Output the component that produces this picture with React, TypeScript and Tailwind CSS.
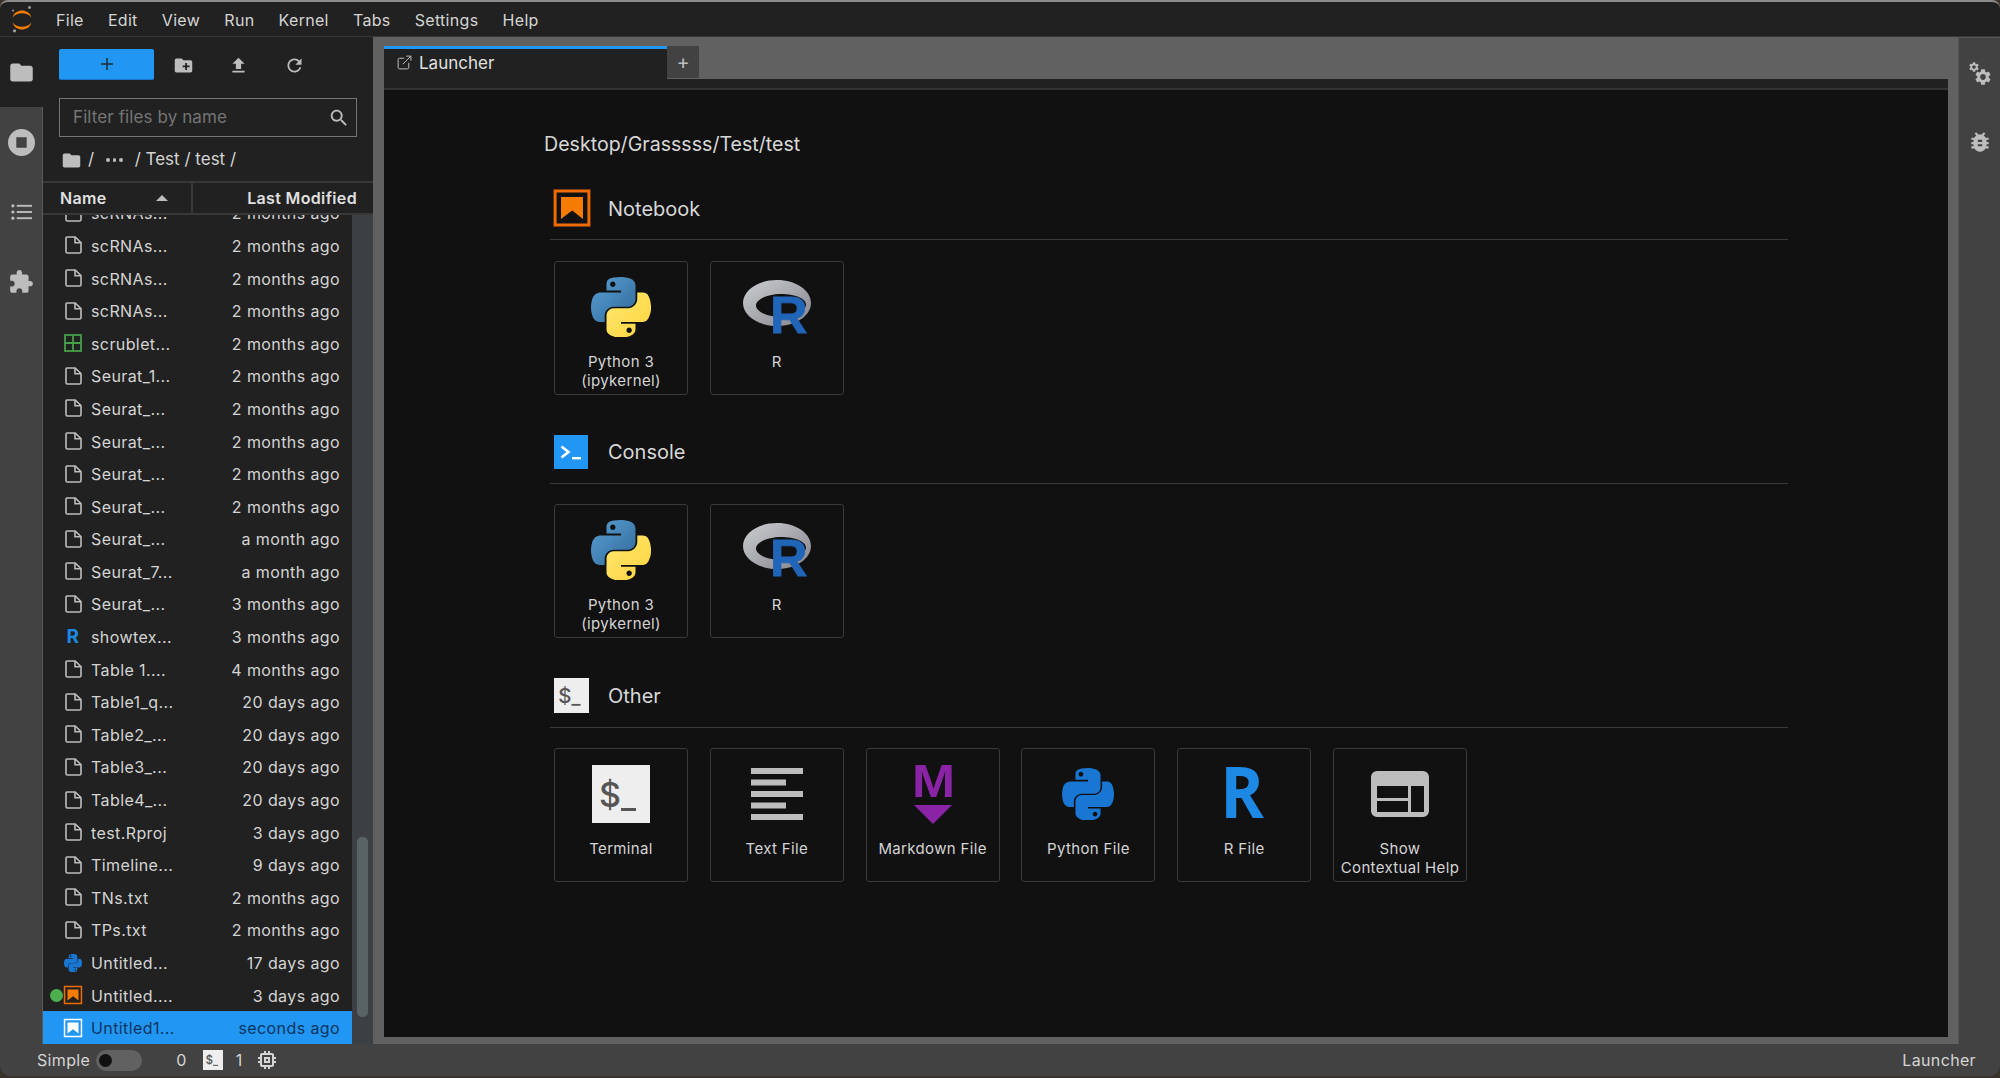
import { ExternalLink } from "lucide-react";
import type { ReactNode } from "react";

const menus = ["File", "Edit", "View", "Run", "Kernel", "Tabs", "Settings", "Help"];

type Kind = "file" | "sheet" | "r" | "py" | "nb" | "nbSel";
type Row = { name: string; time: string; kind?: Kind; dot?: boolean; selected?: boolean };

const rows: Row[] = [
  { name: "scRNAs...", time: "2 months ago" },
  { name: "scRNAs...", time: "2 months ago" },
  { name: "scRNAs...", time: "2 months ago" },
  { name: "scRNAs...", time: "2 months ago" },
  { name: "scrublet...", time: "2 months ago", kind: "sheet" },
  { name: "Seurat_1...", time: "2 months ago" },
  { name: "Seurat_...", time: "2 months ago" },
  { name: "Seurat_...", time: "2 months ago" },
  { name: "Seurat_...", time: "2 months ago" },
  { name: "Seurat_...", time: "2 months ago" },
  { name: "Seurat_...", time: "a month ago" },
  { name: "Seurat_7...", time: "a month ago" },
  { name: "Seurat_...", time: "3 months ago" },
  { name: "showtex...", time: "3 months ago", kind: "r" },
  { name: "Table 1....", time: "4 months ago" },
  { name: "Table1_q...", time: "20 days ago" },
  { name: "Table2_...", time: "20 days ago" },
  { name: "Table3_...", time: "20 days ago" },
  { name: "Table4_...", time: "20 days ago" },
  { name: "test.Rproj", time: "3 days ago" },
  { name: "Timeline...", time: "9 days ago" },
  { name: "TNs.txt", time: "2 months ago" },
  { name: "TPs.txt", time: "2 months ago" },
  { name: "Untitled...", time: "17 days ago", kind: "py" },
  { name: "Untitled....", time: "3 days ago", kind: "nb", dot: true },
  { name: "Untitled1...", time: "seconds ago", kind: "nbSel", selected: true },
];

const PY_TOP =
  "M54.9 0C50.3 0 46 .4 42.1 1.1 30.8 3.1 28.7 7.3 28.7 15v10.2h26.8v3.4H18.6c-7.8 0-14.6 4.7-16.7 13.6-2.5 10.2-2.6 16.6 0 27.3 1.9 7.9 6.5 13.6 14.2 13.6h9.2V71.6c0-8.8 7.7-16.7 16.8-16.7h26.8c7.5 0 13.4-6.1 13.4-13.6V15.8c0-7.3-6.1-12.7-13.4-13.9C64.3.3 59.5 0 54.9 0zM40.4 8.2c2.8 0 5 2.3 5 5.1 0 2.8-2.3 5.1-5 5.1-2.8 0-5-2.3-5-5.1 0-2.8 2.3-5.1 5-5.1z";
const PY_BOTTOM =
  "M85.6 28.7v11.9c0 9.2-7.8 17-16.8 17H42.1c-7.3 0-13.4 6.3-13.4 13.6v25.5c0 7.3 6.3 11.5 13.4 13.6 8.5 2.5 16.6 2.9 26.8 0 6.8-2 13.4-5.9 13.4-13.6V86.5H55.5v-3.4h40.2c7.8 0 10.7-5.4 13.4-13.6 2.8-8.4 2.7-16.5 0-27.2-1.9-7.8-5.6-13.6-13.4-13.6H85.6zM70.6 93.3c2.8 0 5 2.3 5 5.1 0 2.8-2.3 5.1-5 5.1-2.8 0-5-2.3-5-5.1 0-2.8 2.3-5.1 5-5.1z";
const GEAR =
  "M19.14 12.94c.04-.3.06-.61.06-.94 0-.32-.02-.64-.07-.94l2.03-1.58c.18-.14.23-.41.12-.61l-1.92-3.32c-.12-.22-.37-.29-.59-.22l-2.39.96c-.5-.38-1.03-.7-1.62-.94l-.36-2.54c-.04-.24-.24-.41-.48-.41h-3.84c-.24 0-.43.17-.47.41l-.36 2.54c-.59.24-1.13.57-1.62.94l-2.39-.96c-.22-.08-.47 0-.59.22L2.74 8.87c-.12.21-.08.47.12.61l2.03 1.58c-.05.3-.09.63-.09.94s.02.64.07.94l-2.03 1.58c-.18.14-.23.41-.12.61l1.92 3.32c.12.22.37.29.59.22l2.39-.96c.5.38 1.03.7 1.62.94l.36 2.54c.05.24.24.41.48.41h3.84c.24 0 .44-.17.47-.41l.36-2.54c.59-.24 1.13-.56 1.62-.94l2.39.96c.22.08.47 0 .59-.22l1.92-3.32c.12-.22.07-.47-.12-.61l-2.01-1.58zM12 15.6c-1.98 0-3.6-1.62-3.6-3.6s1.62-3.6 3.6-3.6 3.6 1.62 3.6 3.6-1.62 3.6-3.6 3.6z";

function Fill({ d, size, className }: { d: string; size: number; className?: string }) {
  return (
    <svg viewBox="0 0 24 24" width={size} height={size} className={className} fill="currentColor">
      <path d={d} />
    </svg>
  );
}

function JupyterLogo() {
  return (
    <svg viewBox="0 0 22 28" width="22" height="28">
      <path d="M1.5 12.5C3 7.5 7 5.5 11 5.5s8 2 9.5 7C18 9.6 14.6 8.3 11 8.3S4 9.6 1.5 12.5z" fill="#f57c00" />
      <path d="M1.5 17.5C3 22.5 7 24.5 11 24.5s8-2 9.5-7C18 20.4 14.6 21.7 11 21.7S4 20.4 1.5 17.5z" fill="#f57c00" />
      <circle cx="18.5" cy="2.5" r="1.4" fill="#9e9e9e" />
      <circle cx="2" cy="5.5" r="1" fill="#9e9e9e" />
      <circle cx="3.5" cy="25.8" r="1.6" fill="#9e9e9e" />
    </svg>
  );
}

function StopIcon() {
  return (
    <svg viewBox="0 0 26 26" width="27" height="27">
      <path fillRule="evenodd" d="M13 0a13 13 0 1 0 0 26 13 13 0 0 0 0-26zM8 8h10v10H8z" fill="#bdbdbd" />
    </svg>
  );
}

function ListIcon() {
  return (
    <svg viewBox="0 0 22 18" width="21" height="18" fill="#bdbdbd">
      <circle cx="2" cy="2.5" r="1.7" />
      <circle cx="2" cy="9" r="1.7" />
      <circle cx="2" cy="15.5" r="1.7" />
      <rect x="6" y="1.5" width="16" height="2" />
      <rect x="6" y="8" width="16" height="2" />
      <rect x="6" y="14.5" width="16" height="2" />
    </svg>
  );
}

function FileIcon() {
  return (
    <svg viewBox="0 0 17 18" width="17" height="18" fill="none" stroke="#bdbdbd" strokeWidth="1.6">
      <path d="M2 1h8.2L16 6.6V15.6a1.4 1.4 0 0 1-1.4 1.4H2.4A1.4 1.4 0 0 1 1 15.6V2a1 1 0 0 1 1-1z" />
      <path d="M10 1v5.8h6" />
    </svg>
  );
}

function SheetIcon() {
  return (
    <svg viewBox="0 0 18 18" width="18" height="18" fill="none" stroke="#43a047" strokeWidth="1.8">
      <rect x="1" y="1" width="16" height="16" />
      <path d="M9 1v16M1 9h16" />
    </svg>
  );
}

function PythonMono({ size, color = "#1976d2" }: { size: number; color?: string }) {
  return (
    <svg viewBox="0 0 111 111" width={size} height={size} fill={color}>
      <path d={PY_TOP} />
      <path d={PY_BOTTOM} />
    </svg>
  );
}

function PythonLogo({ id }: { id: string }) {
  return (
    <svg viewBox="0 0 111 111" width="60" height="60">
      <defs>
        <linearGradient id={`${id}b`} x1="0" y1="0" x2="1" y2="1">
          <stop offset="0" stopColor="#5a9fd4" />
          <stop offset="1" stopColor="#306998" />
        </linearGradient>
        <linearGradient id={`${id}y`} x1="0" y1="0" x2="1" y2="1">
          <stop offset="0" stopColor="#ffe873" />
          <stop offset="1" stopColor="#ffd43b" />
        </linearGradient>
      </defs>
      <path d={PY_TOP} fill={`url(#${id}b)`} />
      <path d={PY_BOTTOM} fill={`url(#${id}y)`} />
    </svg>
  );
}

function RLogo({ id }: { id: string }) {
  return (
    <svg viewBox="0 0 68 54" width="68" height="54">
      <defs>
        <linearGradient id={id} x1="0" y1="0" x2="1" y2="1">
          <stop offset="0" stopColor="#cbced0" />
          <stop offset="1" stopColor="#84838b" />
        </linearGradient>
      </defs>
      <path
        fillRule="evenodd"
        fill={`url(#${id})`}
        d="M34 0C15.2 0 0 10.3 0 23s15.2 23 34 23 34-10.3 34-23S52.8 0 34 0zm4 14c13.8 0 25 4.6 25 10.5S51.8 37 38 37 13 31.4 13 25.5 24.2 14 38 14z"
      />
      <text
        x="27"
        y="53"
        fontFamily="'Liberation Sans', sans-serif"
        fontWeight="700"
        fontSize="52"
        fill="#2165b8"
        stroke="#2165b8"
        strokeWidth="0.8"
      >
        R
      </text>
    </svg>
  );
}

function NotebookIcon({ size, color = "#ef6c00", fill = "#f57c00" }: { size: number; color?: string; fill?: string }) {
  return (
    <svg viewBox="0 0 22 22" width={size} height={size} className="shrink-0">
      <path fill={color} d="M18.7 3.3v15.4H3.3V3.3h15.4m1.5-1.5H1.8v18.4h18.4V1.8z" />
      <path fill={fill} d="M16.5 16.5l-5.4-4.3-5.6 4.3v-11h11z" />
    </svg>
  );
}

function ConsoleIcon() {
  return (
    <svg viewBox="0 0 34 34" width="34" height="34" className="-ml-[1px]">
      <rect width="34" height="34" fill="#2196f3" />
      <path d="M7.5 11.5l7 5.5-7 5.5" fill="none" stroke="#fff" strokeWidth="2.6" />
      <rect x="18" y="22" width="9" height="2.4" fill="#fff" />
    </svg>
  );
}

function TerminalIcon({ size }: { size: number }) {
  return (
    <svg viewBox="0 0 58 58" width={size} height={size}>
      <rect width="58" height="58" fill="#eeeeee" />
      <text x="7" y="42" fontFamily="Inter, sans-serif" fontWeight="500" fontSize="34" fill="#555555">
        $
      </text>
      <rect x="29" y="43" width="15" height="3" fill="#555555" />
    </svg>
  );
}

function TextFileIcon() {
  return (
    <svg viewBox="0 0 52 52" width="52" height="52" fill="#bdbdbd">
      <rect y="0" width="52" height="6" />
      <rect y="11.5" width="35" height="6" />
      <rect y="23" width="52" height="6" />
      <rect y="34.5" width="35" height="6" />
      <rect y="46" width="52" height="6" />
    </svg>
  );
}

function MarkdownIcon() {
  return (
    <svg viewBox="0 0 40 62" width="40" height="62">
      <text
        transform="translate(20.5 34) scale(1.1 1)"
        textAnchor="middle"
        fontFamily="'Liberation Sans', sans-serif"
        fontWeight="700"
        fontSize="47"
        fill="#8a23a6"
      >
        M
      </text>
      <path d="M1 42h38L20 61z" fill="#8a23a6" />
    </svg>
  );
}

function RFileIcon() {
  return (
    <svg viewBox="0 0 44 54" width="44" height="54">
      <text
        transform="translate(20 50.5) scale(0.92 1)"
        textAnchor="middle"
        fontFamily="'Open Sans', sans-serif"
        fontWeight="700"
        fontSize="72"
        fill="#1e88e5"
      >
        R
      </text>
    </svg>
  );
}

function HelpIcon() {
  return (
    <svg viewBox="0 0 58 46" width="58" height="46">
      <path
        fillRule="evenodd"
        fill="#bdbdbd"
        d="M6 0h46a6 6 0 0 1 6 6v34a6 6 0 0 1-6 6H6a6 6 0 0 1-6-6V6a6 6 0 0 1 6-6zM6 15v12h31V15zm0 15v11h31V30zm34-15v26h13V15z"
      />
    </svg>
  );
}

function GearsIcon() {
  return (
    <svg viewBox="0 0 24 24" width="24" height="24" fill="#bdbdbd">
      <g transform="scale(0.5)">
        <path d={GEAR} />
      </g>
      <g transform="translate(5.4 6.4) scale(0.8)">
        <path d={GEAR} />
      </g>
    </svg>
  );
}

function RowIcon({ kind }: { kind: Kind }) {
  if (kind === "sheet") return <SheetIcon />;
  if (kind === "py") return <PythonMono size={18} />;
  if (kind === "nb") return <NotebookIcon size={22} />;
  if (kind === "nbSel") return <NotebookIcon size={22} color="#ffffff" fill="#ffffff" />;
  if (kind === "r") return <span className="text-[19px] leading-none font-bold text-[#1e88e5]">R</span>;
  return <FileIcon />;
}

function FileRow({ row }: { row: Row }) {
  return (
    <div
      className={`flex h-[32.6px] shrink-0 items-center pr-[12px] text-[16px] tracking-[0.4px] ${
        row.selected ? "bg-[#2196f3] text-[#0b3560]" : "text-[#d4d4d4]"
      }`}
    >
      <div className="flex w-[21px] justify-end pr-px">
        {row.dot && <div className="h-[13px] w-[13px] rounded-full bg-[#4caf50]" />}
      </div>
      <div className="flex w-[18px] items-center justify-center">
        <RowIcon kind={row.kind ?? "file"} />
      </div>
      <span className="ml-[9px] flex-1 pt-px">{row.name}</span>
      <span className="pt-px">{row.time}</span>
    </div>
  );
}

function FileBrowser() {
  return (
    <div className="flex w-[330px] flex-col bg-[#212121]">
      <div className="mt-[12px] flex h-[31px] items-center pl-[16px] text-[#bdbdbd]">
        <div className="flex h-[31px] w-[95px] items-center justify-center rounded-[2px] border-b border-[#1976d2] bg-[#2196f3]">
          <svg viewBox="0 0 16 16" width="16" height="16" fill="none" stroke="#1c2b38" strokeWidth="1.5">
            <path d="M8 2v12M2 8h12" />
          </svg>
        </div>
        <Fill
          className="ml-[19px] mt-[2px]"
          size={21}
          d="M20 6h-8l-2-2H4c-1.11 0-1.99.89-1.99 2L2 18c0 1.11.89 2 2 2h16c1.11 0 2-.89 2-2V8c0-1.11-.89-2-2-2zm-1 8h-3v3h-2v-3h-3v-2h3V9h2v3h3v2z"
        />
        <Fill className="ml-[34px] mt-[2px]" size={21} d="M9 16h6v-6h4l-7-7-7 7h4zm-4 2h14v2H5z" />
        <Fill
          className="ml-[35px] mt-[2px]"
          size={21}
          d="M17.65 6.35C16.2 4.9 14.21 4 12 4c-4.42 0-7.99 3.58-7.99 8s3.57 8 7.99 8c3.73 0 6.84-2.55 7.73-6h-2.08c-.82 2.33-3.04 4-5.65 4-3.31 0-6-2.69-6-6s2.69-6 6-6c1.66 0 3.14.69 4.22 1.78L13 11h7V4l-2.35 2.35z"
        />
      </div>

      <div className="mx-[16px] mt-[18px] flex h-[39px] items-center justify-between border border-[#757575] pl-[13px] pr-[6px]">
        <span className="text-[17px] tracking-[0.1px] text-[#757575]">Filter files by name</span>
        <Fill
          className="text-[#bdbdbd]"
          size={22}
          d="M15.5 14h-.79l-.28-.27C15.41 12.59 16 11.11 16 9.5 16 5.91 13.09 3 9.5 3S3 5.91 3 9.5 5.91 16 9.5 16c1.61 0 3.09-.59 4.23-1.57l.27.28v.79l5 4.99L20.49 19l-4.99-5zm-6 0C7.01 14 5 11.99 5 9.5S7.01 5 9.5 5 14 7.01 14 9.5 11.99 14 9.5 14z"
        />
      </div>

      <div className="flex h-[44px] items-center pl-[18px] pt-[2px] text-[17px] text-[#d4d4d4]">
        <Fill
          className="text-[#bdbdbd]"
          size={21}
          d="M10 4H4c-1.1 0-2 .9-2 2v12c0 1.1.9 2 2 2h16c1.1 0 2-.9 2-2V8c0-1.1-.9-2-2-2h-8l-2-2z"
        />
        <span className="ml-[6px]">/</span>
        <span className="ml-[12px] flex gap-[3px]">
          <i className="h-[3.5px] w-[3.5px] rounded-full bg-[#bdbdbd]" />
          <i className="h-[3.5px] w-[3.5px] rounded-full bg-[#bdbdbd]" />
          <i className="h-[3.5px] w-[3.5px] rounded-full bg-[#bdbdbd]" />
        </span>
        <span className="ml-[12px] whitespace-pre">/ Test / test /</span>
      </div>

      <div className="flex h-[34px] border-y-2 border-[#383838] text-[16px] font-semibold tracking-[0.35px] text-[#e0e0e0]">
        <div className="flex w-[150px] items-center border-r-2 border-[#383838] pl-[17px]">
          <span className="flex-1">Name</span>
          <svg viewBox="0 0 12 6" width="12" height="6" className="mr-[23px]">
            <path d="M0 6l6-6 6 6z" fill="#bdbdbd" />
          </svg>
        </div>
        <div className="flex flex-1 items-center justify-end pr-[16px]">Last Modified</div>
      </div>

      <div className="flex min-h-0 flex-1">
        <div className="flex min-w-0 flex-1 flex-col justify-end overflow-hidden">
          {rows.map((row, i) => (
            <FileRow key={i} row={row} />
          ))}
        </div>
        <div className="flex w-[21px] flex-col justify-end bg-[#3c4043] pb-[27px] pl-[5px] pr-[5px]">
          <div className="h-[180px] rounded-[5px] bg-[#596366]" />
        </div>
      </div>
    </div>
  );
}

function Card({ label, icon }: { label: ReactNode; icon: ReactNode }) {
  return (
    <div className="flex h-[134px] w-[134px] shrink-0 flex-col items-center rounded-[3px] border border-[#3a3a3a] pt-[14px]">
      <div className="flex h-[62px] items-center justify-center">{icon}</div>
      <div className="mt-[14px] text-center text-[15px] leading-[19px] tracking-[0.35px] text-[#d4d4d4]">{label}</div>
    </div>
  );
}

function Section({ title, icon, children }: { title: string; icon: ReactNode; children: ReactNode }) {
  return (
    <section className="mb-[39.3px]">
      <div className="flex h-[36px] items-center pl-[3px]">
        <div className="flex h-[36px] w-[37px] items-center justify-center">{icon}</div>
        <h2 className="ml-[18px] pt-px text-[20px] text-[#d8d8d8]">{title}</h2>
      </div>
      <div className="mt-[13px] border-t-[1.5px] border-[#3a3a3a]" />
      <div className="mt-[20.5px] flex gap-[21.8px] pl-[4px]">{children}</div>
    </section>
  );
}

function Launcher() {
  const kernelCards = (id: string) => (
    <>
      <Card
        icon={<PythonLogo id={id} />}
        label={
          <>
            Python 3
            <br />
            (ipykernel)
          </>
        }
      />
      <Card icon={<RLogo id={`${id}r`} />} label="R" />
    </>
  );

  return (
    <div className="min-h-0 flex-1 bg-[#111111] pl-[160px] pt-[42px]">
      <div className="text-[19.6px] leading-[24px] text-[#d8d8d8]">Desktop/Grasssss/Test/test</div>
      <div className="ml-[6px] mt-[34px] w-[1238px]">
        <Section title="Notebook" icon={<NotebookIcon size={44} />}>
          {kernelCards("nb")}
        </Section>
        <Section title="Console" icon={<ConsoleIcon />}>
          {kernelCards("con")}
        </Section>
        <Section title="Other" icon={<TerminalIcon size={35} />}>
          <Card icon={<TerminalIcon size={58} />} label="Terminal" />
          <Card icon={<TextFileIcon />} label="Text File" />
          <Card icon={<MarkdownIcon />} label="Markdown File" />
          <Card icon={<PythonMono size={52} />} label="Python File" />
          <Card icon={<RFileIcon />} label="R File" />
          <Card
            icon={<HelpIcon />}
            label={
              <>
                Show
                <br />
                Contextual Help
              </>
            }
          />
        </Section>
      </div>
    </div>
  );
}

export default function App() {
  return (
    <div className="flex h-screen flex-col overflow-hidden bg-[#3a332c] font-[Inter,sans-serif]">
      <div className="flex h-[37px] shrink-0 items-center rounded-t-[8px] border-t-2 border-b border-t-[#8c8c8c] border-b-[#383838] bg-[#212121] pl-[11px] text-[16px] tracking-[0.3px] text-[#d4d4d4]">
        <JupyterLogo />
        <nav className="ml-[23px] flex gap-[24.2px] pt-[2px]">
          {menus.map((m) => (
            <span key={m}>{m}</span>
          ))}
        </nav>
      </div>

      <div className="flex min-h-0 flex-1">
        <div className="flex w-[43px] shrink-0 flex-col border-r border-[#5a5a5a] bg-[#424242] text-[#bdbdbd]">
          <div className="-mr-px flex h-[70px] items-center justify-center bg-[#212121]">
            <Fill size={27} d="M10 4H4c-1.1 0-2 .9-2 2v12c0 1.1.9 2 2 2h16c1.1 0 2-.9 2-2V8c0-1.1-.9-2-2-2h-8l-2-2z" />
          </div>
          <div className="flex h-[70px] items-center justify-center">
            <StopIcon />
          </div>
          <div className="flex h-[70px] items-center justify-center">
            <ListIcon />
          </div>
          <div className="flex h-[70px] items-center justify-center">
            <Fill
              size={26}
              d="M20.5 11H19V7c0-1.1-.9-2-2-2h-4V3.5C13 2.12 11.88 1 10.5 1S8 2.12 8 3.5V5H4c-1.1 0-1.99.9-1.99 2v3.8H3.5c1.49 0 2.7 1.21 2.7 2.7s-1.21 2.7-2.7 2.7H2V20c0 1.1.9 2 2 2h3.8v-1.5c0-1.49 1.21-2.7 2.7-2.7 1.49 0 2.7 1.21 2.7 2.7V22H17c1.1 0 2-.9 2-2v-4h1.5c1.38 0 2.5-1.12 2.5-2.5S21.88 11 20.5 11z"
            />
          </div>
        </div>

        <FileBrowser />

        <div className="flex min-w-0 flex-1 flex-col bg-[#616161] pb-[7px] pl-[11px] pr-[10px] pt-[9px]">
          <div className="flex h-[33px]">
            <div className="flex w-[283px] items-center border-t-[3px] border-[#2196f3] bg-[#212121] pl-[12px] text-[17px] text-[#e0e0e0]">
              <ExternalLink size={17} strokeWidth={1.4} className="-mt-[3px] text-[#bdbdbd]" />
              <span className="ml-[6px]">Launcher</span>
            </div>
            <div className="flex h-[32px] w-[32px] items-center justify-center bg-[#424242] text-[20px] text-[#bdbdbd]">
              +
            </div>
          </div>
          <div className="h-[11px] shrink-0 border-b-2 border-[#333333] bg-[#212121]" />
          <Launcher />
        </div>

        <div className="flex w-[42px] shrink-0 flex-col items-center border-l border-t border-[#555555] bg-[#424242] pt-[23px]">
          <GearsIcon />
          <Fill
            className="mt-[44px] text-[#bdbdbd]"
            size={26}
            d="M20 8h-2.81c-.45-.78-1.07-1.45-1.82-1.96L17 4.41 15.59 3l-2.17 2.17C12.96 5.06 12.49 5 12 5c-.49 0-.96.06-1.41.17L8.41 3 7 4.41l1.62 1.63C7.88 6.55 7.26 7.22 6.81 8H4v2h2.09c-.05.33-.09.66-.09 1v1H4v2h2v1c0 .34.04.67.09 1H4v2h2.81c1.04 1.79 2.97 3 5.19 3s4.15-1.21 5.19-3H20v-2h-2.09c.05-.33.09-.66.09-1v-1h2v-2h-2v-1c0-.34-.04-.67-.09-1H20V8zm-6 8h-4v-2h4v2zm0-4h-4v-2h4v2z"
          />
        </div>
      </div>

      <div className="mb-[2px] flex h-[32px] shrink-0 items-center rounded-b-[10px] bg-[#424242] pl-[37px] pr-[24px] text-[16px] tracking-[0.35px] text-[#d4d4d4]">
        <span>Simple</span>
        <div className="ml-[6px] flex h-[21px] w-[46px] items-center rounded-full bg-[#616161] pl-[3px]">
          <div className="h-[13px] w-[13px] rounded-full bg-[#111111]" />
        </div>
        <span className="ml-[34px]">0</span>
        <div className="ml-[16px]">
          <TerminalIcon size={20} />
        </div>
        <span className="ml-[13px]">1</span>
        <Fill
          className="ml-[12px] text-[#d4d4d4]"
          size={24}
          d="M15 9H9v6h6V9zm-2 4h-2v-2h2v2zm8-2V9h-2V7c0-1.1-.9-2-2-2h-2V3h-2v2h-2V3H9v2H7c-1.1 0-2 .9-2 2v2H3v2h2v2H3v2h2v2c0 1.1.9 2 2 2h2v2h2v-2h2v2h2v-2h2c1.1 0 2-.9 2-2v-2h2v-2h-2v-2h2zm-4 6H7V7h10v10z"
        />
        <span className="ml-auto">Launcher</span>
      </div>
    </div>
  );
}
